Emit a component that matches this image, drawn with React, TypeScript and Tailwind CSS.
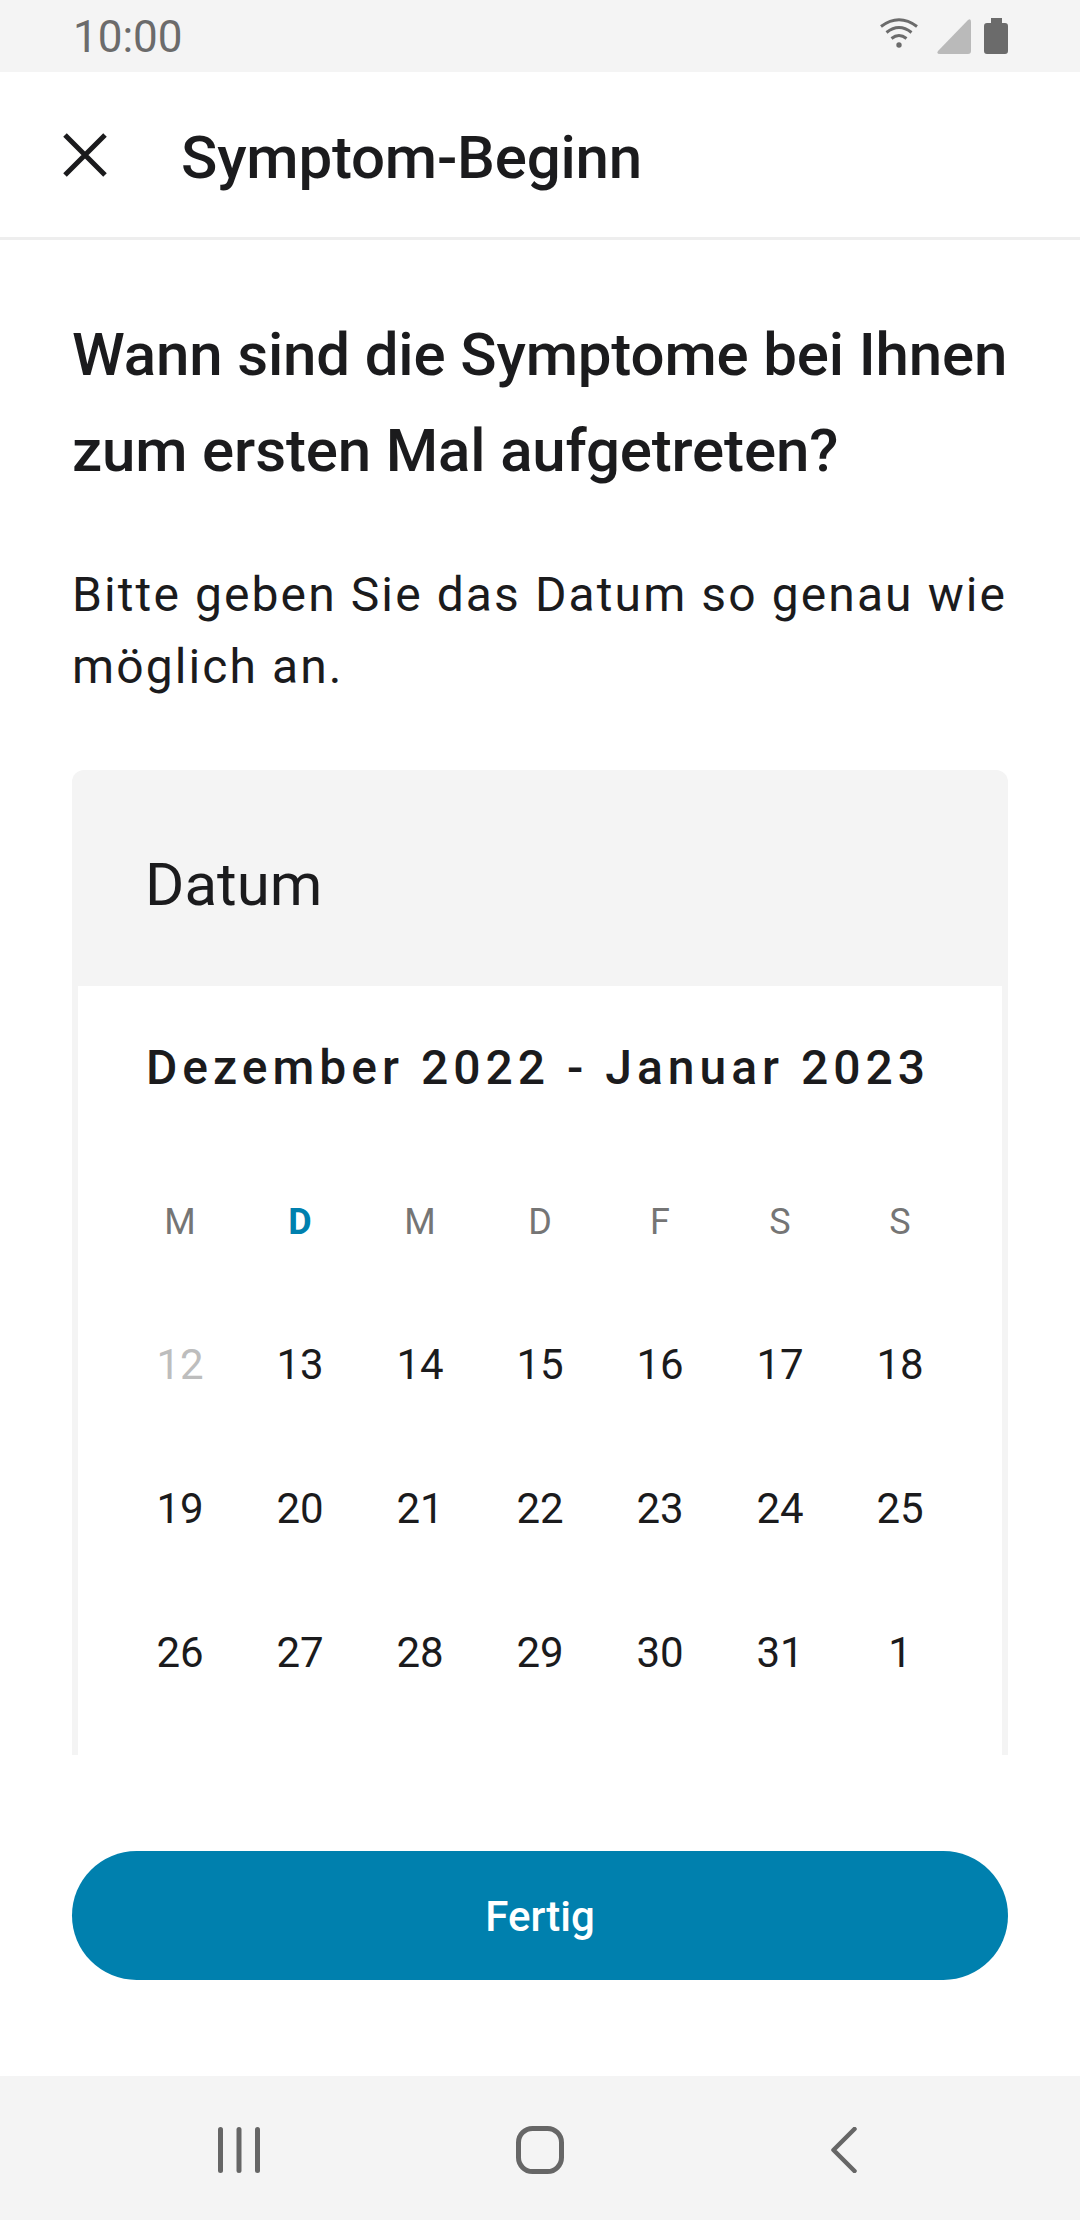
const weekdays = ['M', 'D', 'M', 'D', 'F', 'S', 'S'];
const weeks = [
  [12, 13, 14, 15, 16, 17, 18],
  [19, 20, 21, 22, 23, 24, 25],
  [26, 27, 28, 29, 30, 31, 1],
];

function StatusIcons() {
  return (
    <div className="flex items-start h-[36px]">
      <svg width="40" height="30" viewBox="0 0 40 30" className="mr-[18px]" fill="none" stroke="#6b6b6b" strokeWidth="3">
        <path d="M2 8.5 Q20 -5 38 8.5" />
        <path d="M7.5 14.5 Q20 4.5 32.5 14.5" />
        <path d="M12.5 20.5 Q20 14.5 27.5 20.5" />
        <circle cx="20" cy="27" r="2.7" fill="#6b6b6b" stroke="none" />
      </svg>
      <svg width="34" height="35" viewBox="0 0 34 35" className="mt-[1px] mr-[13px]">
        <path d="M1 32 L31 1 Q34 -1 34 3 L34 32 Q34 35 31 35 L3 35 Q-1 35 1 32 Z" fill="#bababa" />
      </svg>
      <svg width="24" height="36" viewBox="0 0 24 36">
        <path d="M7 0 H18 V5 H21 Q24 5 24 8 V33 Q24 36 21 36 H3 Q0 36 0 33 V8 Q0 5 3 5 H7 Z" fill="#6b6b6b" />
      </svg>
    </div>
  );
}

export default function App() {
  return (
    <div className="w-[1080px] h-[2220px] flex flex-col bg-white text-[#1b1b1d] font-['Roboto',sans-serif]">
      <div className="h-[72px] bg-[#f4f4f4] flex items-center justify-between pl-[73px] pr-[72px]">
        <span className="text-[44px] text-[#6b6b6b] leading-none pt-[2px]">10:00</span>
        <StatusIcons />
      </div>

      <div className="h-[168px] flex items-center border-b-[3px] border-[#eeeeee]">
        <svg width="44" height="44" viewBox="0 0 44 44" className="ml-[63px]" fill="none" stroke="#1b1b1d" strokeWidth="5">
          <path d="M2 2 L42 42 M42 2 L2 42" />
        </svg>
        <h1 className="ml-[74px] mt-[6px] text-[60px] font-medium leading-none tracking-[-0.2px]">Symptom-Beginn</h1>
      </div>

      <div className="flex-1 flex flex-col px-[72px] min-h-0">
        <h2 className="mt-[67px] text-[60px] font-medium leading-[96px] tracking-[-0.15px] whitespace-nowrap">
          Wann sind die Symptome bei Ihnen
          <br />
          zum ersten Mal aufgetreten?
        </h2>
        <p className="mt-[60px] text-[48px] leading-[72px] tracking-[2.1px]">
          Bitte geben Sie das Datum so genau wie möglich an.
        </p>

        <div className="mt-[67px] h-[985px] shrink-0 flex flex-col overflow-hidden">
          <div className="h-[216px] shrink-0 bg-[#f4f4f4] rounded-t-[12px] flex items-center pl-[73px] pt-[14px]">
            <span className="text-[60px] leading-none">Datum</span>
          </div>
          <div className="flex-1 border-x-[6px] border-[#f4f4f4]">
            <div className="mt-[60px] pl-[68px] text-[48px] font-medium tracking-[5px] leading-[44px]">
              Dezember 2022 - Januar 2023
            </div>
            <div className="mt-[105px] mx-[42px] grid grid-cols-7 h-[44px] items-center text-center text-[36px] text-[#757575]">
              {weekdays.map((day, i) => (
                <span key={i} className={i === 1 ? 'font-bold text-[#0080ae]' : ''}>
                  {day}
                </span>
              ))}
            </div>
            <div className="mt-[53px] mx-[42px] grid grid-cols-7 auto-rows-[144px] items-center text-center text-[42px]">
              {weeks.flat().map((n, i) => (
                <span key={i} className={i === 0 ? 'text-[#bdbdbd]' : ''}>
                  {n}
                </span>
              ))}
            </div>
          </div>
        </div>

        <button className="mt-[96px] h-[129px] shrink-0 rounded-full bg-[#0080ae] text-white text-[42px] font-medium pt-[2px]">
          Fertig
        </button>
      </div>

      <div className="h-[144px] bg-[#f4f4f4] grid grid-cols-3 justify-items-center items-center px-[88px] pt-[3px]">
        <svg width="42" height="46" viewBox="0 0 42 46" fill="#666666">
          <rect x="0" y="0" width="5" height="46" rx="2.5" />
          <rect x="18.5" y="0" width="5" height="46" rx="2.5" />
          <rect x="37" y="0" width="5" height="46" rx="2.5" />
        </svg>
        <svg width="48" height="48" viewBox="0 0 48 48" fill="none" stroke="#666666" strokeWidth="5">
          <rect x="2.5" y="2.5" width="43" height="43" rx="14" />
        </svg>
        <svg width="26" height="46" viewBox="0 0 26 46" className="ml-[6px]" fill="none" stroke="#666666" strokeWidth="4.5" strokeLinecap="round" strokeLinejoin="round">
          <path d="M23.5 2 L2.5 23 L23.5 44" />
        </svg>
      </div>
    </div>
  );
}
